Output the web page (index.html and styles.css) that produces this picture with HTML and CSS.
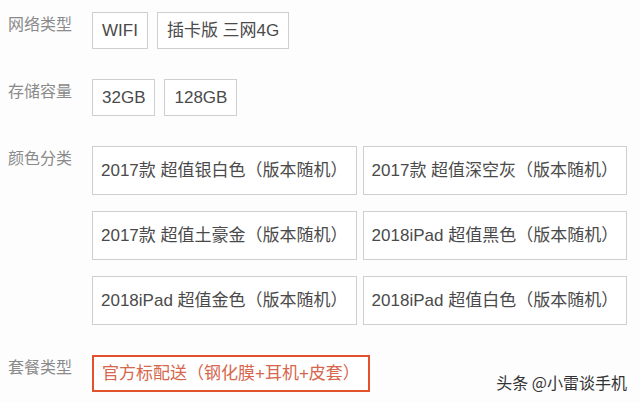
FILE: index.html
```html
<!DOCTYPE html>
<html lang="zh-CN">
<head>
  <meta charset="UTF-8" />
  <meta name="viewport" content="width=device-width, initial-scale=1" />
  <title>商品规格</title>
  <link rel="stylesheet" href="styles.css">
</head>
<body>

  <div class="spec">
    <div class="row">
      <div class="label">网络类型</div>
      <div class="opts">
        <span class="opt">WIFI</span>
        <span class="opt">插卡版 三网4G</span>
      </div>
    </div>

    <div class="row">
      <div class="label">存储容量</div>
      <div class="opts">
        <span class="opt">32GB</span>
        <span class="opt">128GB</span>
      </div>
    </div>

    <div class="row">
      <div class="label">颜色分类</div>
      <div class="opts grid">
        <span class="opt tall">2017款 超值银白色（版本随机）</span>
        <span class="opt tall">2017款 超值深空灰（版本随机）</span>
        <span class="opt tall">2017款 超值土豪金（版本随机）</span>
        <span class="opt tall">2018iPad 超值黑色（版本随机）</span>
        <span class="opt tall">2018iPad 超值金色（版本随机）</span>
        <span class="opt tall">2018iPad 超值白色（版本随机）</span>
      </div>
    </div>

    <div class="row">
      <div class="label">套餐类型</div>
      <div class="opts">
        <span class="opt selected">官方标配送（钢化膜+耳机+皮套）</span>
      </div>
    </div>
  </div>

  <div class="mark">头条 @小雷谈手机</div>

</body>
</html>
```

FILE: styles.css
```css
body {
  margin: 0;
  padding: 12px 0 0 8px;
  background: #fdfdfd;
  font-family: "Liberation Sans", "Noto Sans CJK SC", sans-serif;
  font-size: 16px;
  color: #444;
  position: relative;
  height: 391px;
  overflow: hidden;
}
.row {
  display: flex;
  align-items: flex-start;
  margin-bottom: 30px;
}
.label {
  width: 84px;
  flex-shrink: 0;
  margin-top: 2px;
  line-height: 22px;
  color: #8a8a8a;
}
.opts {
  display: flex;
  gap: 9px;
}
.opts.grid {
  display: grid;
  grid-template-columns: repeat(2, max-content);
  justify-items: start;
  gap: 16px 6px;
}
.opt {
  display: inline-block;
  padding: 7px 9px;
  line-height: 21px;
  font-size: 17px;
  border: 1px solid #cfcfcf;
  background: #fff;
  color: #4a4a4a;
  white-space: nowrap;
}
.opt.tall {
  padding: 13px 8px;
}
.opt.selected {
  padding: 6px 8px;
  border: 2px solid #e2522c;
  color: #d6664c;
}
.mark {
  position: absolute;
  right: 13px;
  bottom: 9px;
  font-family: "Noto Sans CJK SC", sans-serif;
  font-size: 16px;
  color: #333;
  text-shadow: 0 0 2px #fff, 0 0 2px #fff;
}
```
